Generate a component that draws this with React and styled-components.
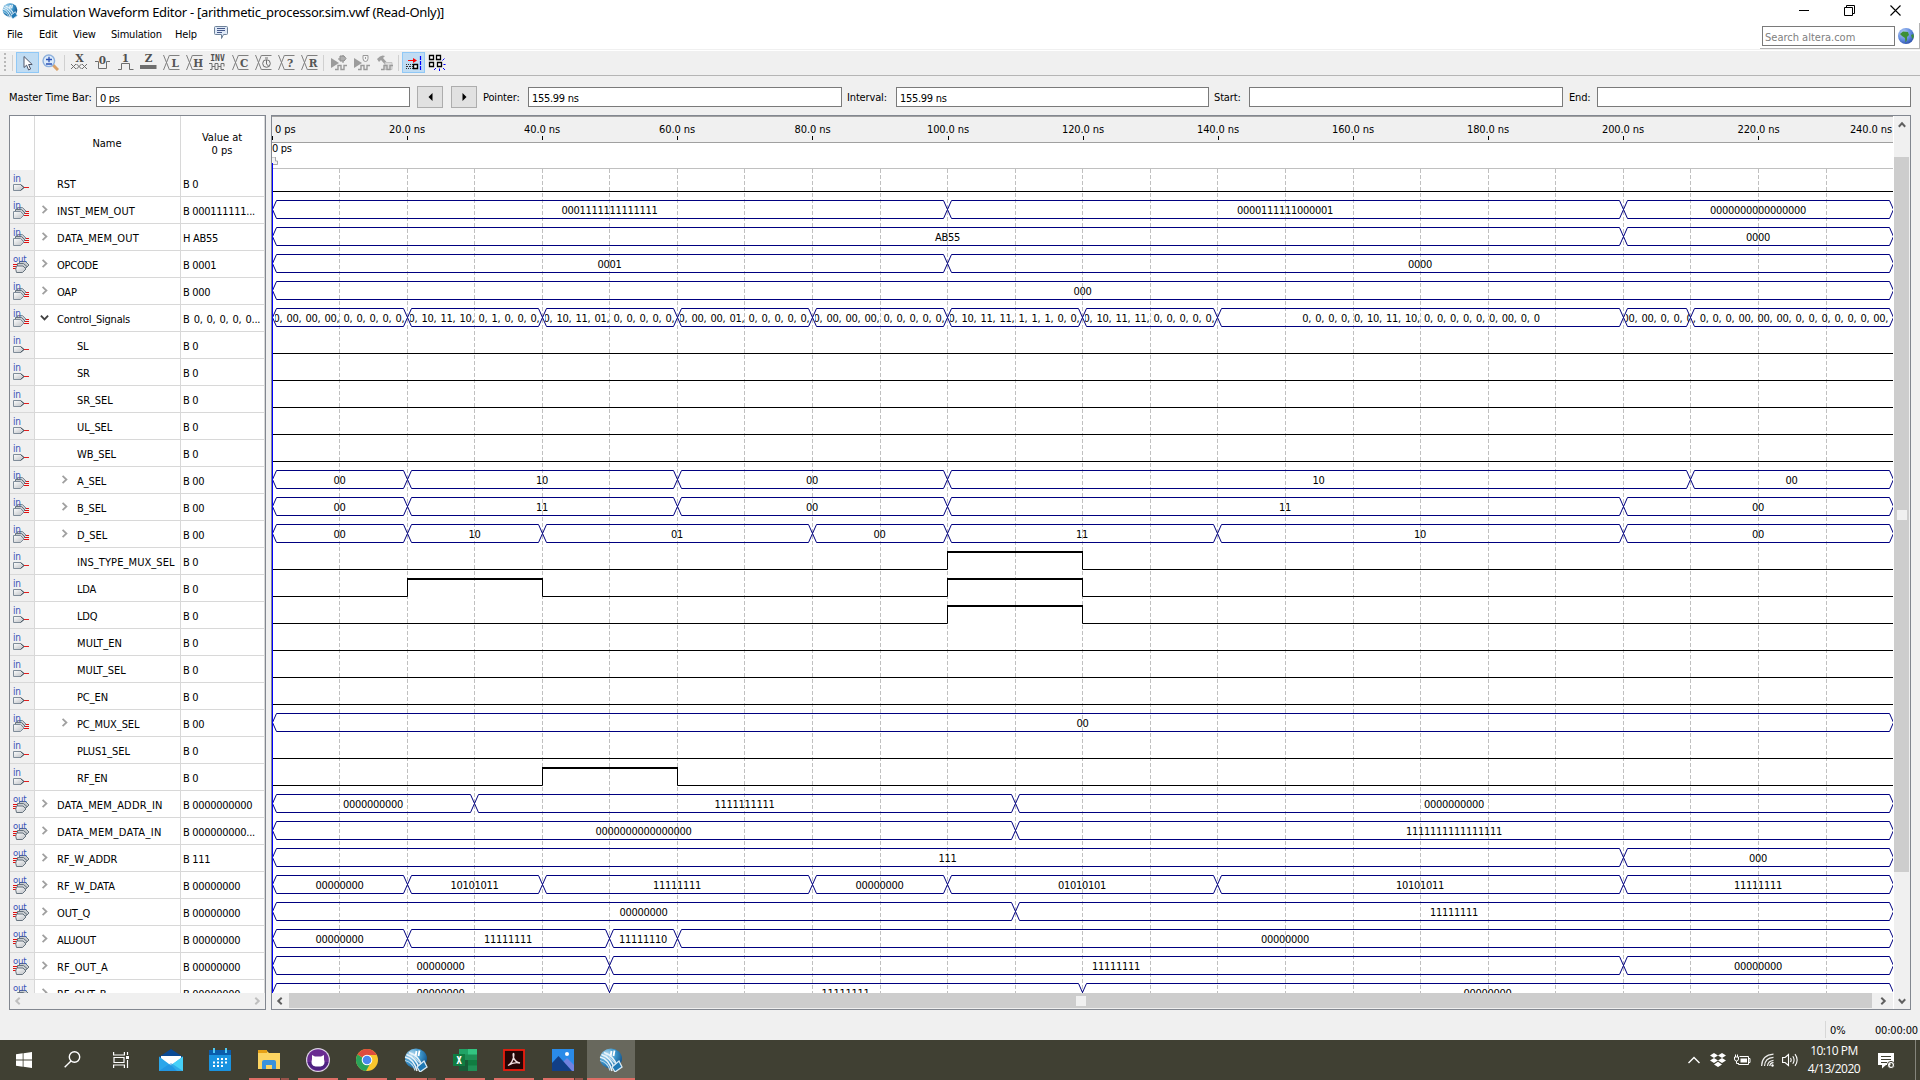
import React from "react";
import styled, { createGlobalStyle, css } from "styled-components";

const Global = createGlobalStyle`
  * { box-sizing: border-box; }
  html, body { margin: 0; padding: 0; overflow: hidden; background: #f0f0f0; }
`;

const UI = `"DejaVu Sans Condensed", "DejaVu Sans", sans-serif`;
const SEGOE = `"Open Sans", "Noto Sans", sans-serif`;

const Window = styled.div`
  width: 1920px;
  height: 1080px;
  display: flex;
  flex-direction: column;
  background: #f0f0f0;
  color: #000;
  font-family: ${UI};
  font-stretch: condensed;
  font-size: 11px;
  letter-spacing: -0.3px;
  line-height: 13px;
  overflow: hidden;
  svg { display: block; flex: none; }
`;

/* ---------- title and menu ---------- */
const TitleBar = styled.div`
  height: 23px;
  background: #fff;
  display: flex;
  align-items: flex-start;
  padding: 3px 19px 0 2px;
`;
const Title = styled.div`
  font-family: "Noto Sans", sans-serif;
  font-stretch: normal;
  font-size: 13px;
  letter-spacing: ${(p) => p.$ls}px;
  line-height: 18px;
  margin-left: 5px;
  flex: 1;
  white-space: nowrap;
`;
const Caption = styled.div`
  display: flex;
  gap: 35px;
  padding-top: 2px;
`;
const MenuBar = styled.div`
  height: 26px;
  background: #fff;
  display: flex;
  padding-left: 7px;
`;
const MenuItem = styled.div`
  width: ${(p) => p.$w}px;
  padding-top: 5px;
  letter-spacing: -0.2px;
`;
const MenuIcon = styled.div`
  padding-top: 3px;
  flex: 1;
`;
const SearchTray = styled.div`
  width: 160px;
  display: flex;
  gap: 3px;
  padding: 3px 0 0 2px;
  border-right: 1px solid #b4b4b4;
  border-bottom: 1px solid #b4b4b4;
`;
const SearchBox = styled.div`
  width: 133px;
  height: 20px;
  border: 1px solid #7a7a7a;
  color: #808080;
  padding: 4px 2px;
  letter-spacing: 0;
`;
const Globe = styled.div`padding-top: 2px;`;

/* ---------- toolbar ---------- */
const ToolBar = styled.div`
  height: 27px;
  border-top: 1px solid #f0f0f0;
  box-shadow: inset 0 1px 0 #fff;
  border-bottom: 1px solid #b5b5b5;
  display: flex;
  padding: 2px 0 0 4px;
  font-stretch: normal;
  letter-spacing: 0;
`;
const Tool = styled.div`
  width: 23px;
  height: 21px;
  display: flex;
  align-items: center;
  justify-content: center;
  ${(p) =>
    p.$on &&
    css`
      background: #c0dcf3;
      border: 1px solid #90c8f6;
    `}
`;
const Sep = styled.div`
  width: 1px;
  height: 16px;
  margin: 3px 3px 0 2px;
  background: #d0d0d0;
`;
const Handle = styled.div`
  width: 2px;
  height: 20px;
  margin: 1px 4px 0 0;
  background: repeating-linear-gradient(#b8b8b8 0 2px, transparent 2px 4px);
`;

/* ---------- time fields ---------- */
const TimeBar = styled.div`
  height: 39px;
  display: flex;
  align-items: flex-start;
  padding: 10px 9px 0 9px;
`;
const Label = styled.div`
  width: ${(p) => p.$w}px;
  padding: 5px 0 0 ${(p) => p.$pad || 0}px;
  white-space: nowrap;
  letter-spacing: ${(p) => p.$ls ?? -0.15}px;
`;
const Field = styled.div`
  width: ${(p) => p.$w || 314}px;
  height: 20px;
  margin-top: 1px;
  border: 1px solid #7a7a7a;
  background: #fff;
  padding: 4px 3px;
`;
const Step = styled.div`
  width: 26px;
  height: 22px;
  margin-left: ${(p) => p.$gap}px;
  border: 1px solid #adadad;
  background: #e1e1e1;
  display: flex;
  align-items: center;
  justify-content: center;
`;

/* ---------- panels ---------- */
const Panels = styled.div`
  height: 895px;
  display: flex;
  gap: 5px;
  padding: 0 9px;
`;
const Frame = styled.div`
  width: ${(p) => p.$w}px;
  height: 895px;
  border: 1px solid #828790;
  display: flex;
  flex-direction: ${(p) => p.$dir};
  overflow: hidden;
`;
const Table = styled.div`
  height: 877px;
  background: #fff;
  overflow: hidden;
  display: flex;
  flex-direction: column;
`;
const rowGrid = css`
  display: grid;
  grid-template-columns: 25px 146px 84px;
  flex: none;
`;
const HeadRow = styled.div`
  ${rowGrid}
  height: 54px;
`;
const HeadCell = styled.div`
  border-right: 1px solid #d8d8d8;
  display: flex;
  align-items: center;
  justify-content: center;
  text-align: center;
  letter-spacing: 0;
  padding: 1px 1px 0 0;
`;
const Row = styled.div`
  ${rowGrid}
  height: 27px;
`;
const Cell = styled.div`
  border-right: 1px solid #d8d8d8;
  border-bottom: 1px solid #d8d8d8;
  background: ${(p) => (p.$icon ? "#f0f0f0" : "#fff")};
  display: flex;
  align-items: center;
  overflow: hidden;
  white-space: nowrap;
  padding-left: ${(p) => p.$pad || 0}px;
`;
const Expander = styled.div`
  width: 17px;
  height: 10px;
  flex: none;
`;
const SignalName = styled.span`
  padding-top: 2px;
  letter-spacing: ${(p) => p.$ls}px;
`;
const SignalValue = styled.span`
  padding-top: 2px;
  word-spacing: ${(p) => (p.$list ? 1.3 : 0)}px;
`;

/* ---------- scroll bars ---------- */
const HScroll = styled.div`
  height: 16px;
  display: flex;
  background: #f0f0f0;
`;
const VScroll = styled.div`
  width: 17px;
  display: flex;
  flex-direction: column;
  background: #f0f0f0;
  border-left: 1px solid #fff;
`;
const ArrowBox = styled.div`
  width: ${(p) => p.$w || 16}px;
  height: ${(p) => p.$h || 15}px;
  display: flex;
  align-items: center;
  justify-content: center;
`;
const Track = styled.div`
  flex: 1;
  display: flex;
  flex-direction: column;
`;
const Thumb = styled.div`
  background: #cdcdcd;
  display: flex;
  align-items: center;
  justify-content: center;
  width: ${(p) => p.$w}px;
  height: ${(p) => p.$h}px;
  margin-top: ${(p) => p.$mt || 0}px;
`;
const Grip = styled.div`
  width: 10px;
  height: 10px;
  background: #f0f0f0;
`;

/* ---------- waveform ---------- */
const WaveColumn = styled.div`
  width: 1621px;
  display: flex;
  flex-direction: column;
  overflow: hidden;
`;
const Ruler = styled.div`
  height: 27px;
  flex: none;
  border-top: 1px solid #a0a0a0;
  border-bottom: 1px solid #a0a0a0;
  display: flex;
`;
const RulerMark = styled.div`
  width: ${(p) => p.$w}px;
  padding-top: 7px;
  padding-left: ${(p) => (p.$align ? 0 : 1)}px;
  text-align: ${(p) => p.$align || "center"};
  flex: none;
  letter-spacing: -0.1px;
`;
const MarkText = styled.div`line-height: 12px; height: 12px; white-space: nowrap;`;
const Tick = styled.div`
  width: 1px;
  height: 4px;
  background: #000;
  margin: 0 auto;
`;
const FirstTick = styled(Tick)`margin: 0;`;
const CursorBar = styled.div`
  height: 26px;
  flex: none;
  background: #fff;
  border-bottom: 1px solid #c0c0c0;
  line-height: 12px;
  position: relative;
`;
const CursorLabel = styled.div`
  height: 14px;
`;
const Lanes = styled.div`
  height: 824px;
  background: #fff;
  overflow: hidden;
  position: relative;
  padding-top: 1px;
`;
const Lane = styled.div`
  height: 27px;
  position: relative;
  display: flex;
`;
const Overlay = styled.svg`
  position: absolute;
  left: 0;
  top: 0;
`;
const MasterLine = styled.div`
  position: absolute;
  left: 0;
  top: ${(p) => p.$top}px;
  width: 1px;
  height: ${(p) => p.$h}px;
  background: #0000ff;
`;
const Segment = styled.div`
  flex: none;
  margin: 0 4px;
  height: 27px;
  display: flex;
  justify-content: center;
  align-items: center;
  overflow: hidden;
  white-space: nowrap;
  position: relative;
  word-spacing: 1.3px;
`;
const ListSegment = styled(Segment)`
  margin: 0 1px 0 3px;
`;
const SegmentText = styled.span`flex: none;`;

/* ---------- status and task bar ---------- */
const StatusBar = styled.div`
  height: 30px;
  display: flex;
  justify-content: flex-end;
  padding: 11px 1px 0 0;
`;
const StatusItem = styled.div`
  width: ${(p) => p.$w}px;
  height: 17px;
  padding: 3px 0 0 4px;
  letter-spacing: ${(p) => p.$ls}px;
  border-left: 1px solid ${(p) => (p.$line ? "#d7d7d7" : "transparent")};
`;
const TaskBar = styled.div`
  height: 40px;
  background: #404033;
  display: flex;
  color: #fff;
`;
const TaskButton = styled.div`
  width: ${(p) => p.$w || 49}px;
  height: 40px;
  display: flex;
  flex-direction: column;
  align-items: center;
  background: ${(p) => (p.$active ? "#68685d" : "transparent")};
`;
const AppIcon = styled.div`
  height: 38px;
  display: flex;
  align-items: center;
  justify-content: center;
  padding-top: 1px;
`;
const RunLine = styled.div`
  width: ${(p) => (p.$active ? 48 : 40)}px;
  height: 2px;
  background: ${(p) =>
    p.$multi
      ? "linear-gradient(90deg, #dd6e66 31px, #4a3b32 31px 32px, #98534a 32px)"
      : "#dd6e66"};
`;
const Tray = styled.div`
  margin-left: auto;
  display: flex;
  align-items: center;
`;
const TrayIcon = styled.div`
  width: ${(p) => p.$w}px;
`;
const Clock = styled.div`
  width: 60px;
  font-family: ${SEGOE};
  font-stretch: normal;
  font-size: 12px;
  line-height: 18px;
  letter-spacing: -0.5px;
  text-align: center;
  white-space: nowrap;
  margin-right: 14px;
`;
const ShowDesktop = styled.div`
  width: 5px;
  height: 40px;
  margin-left: 20px;
  border-left: 1px solid #85857c;
`;

/* ---------- data ---------- */
const K = 6.757;
const W = 1621;
const xp = (t) => Math.floor(K * t);
const z = (n) => "0".repeat(n);
const o = (n) => "1".repeat(n);

const ctl = (a, b, d, ins = 0, lda = 0, ldq = 0, rf = 0) =>
  `0, 0, 0, 0, 0, ${a}, ${b}, ${d}, ${ins}, ${lda}, ${ldq}, 0, 0, 0, 00, 0, ${rf}`;

const bus = (name, value, segs, extra = {}) => ({ name, value, segs, kind: "inBus", ...extra });
const bit = (name, highs = [], extra = {}) => ({ name, value: "B 0", highs, kind: "in", child: true, ...extra });
const out = { kind: "outBus" };
const child = { child: true };

const signals = [
  bit("RST", [], { child: false }),
  bus("INST_MEM_OUT", "B 000111111...", [[0, "0001111111111111"], [100, "0000111111000001"], [200, z(16)]], { ls: 0.08 }),
  bus("DATA_MEM_OUT", "H AB55", [[0, "AB55"], [200, "0000"]], { ls: 0.2 }),
  bus("OPCODE", "B 0001", [[0, "0001"], [100, "0000"]], out),
  bus("OAP", "B 000", [[0, "000"]]),
  bus(
    "Control_Signals",
    "B 0, 0, 0, 0, 0...",
    [
      [0, ctl("00", "00", "00")],
      [20, ctl("10", "11", "10", 0, 1)],
      [40, ctl("10", "11", "01", 0, 0, 0, 1)],
      [60, ctl("00", "00", "01")],
      [80, ctl("00", "00", "00")],
      [100, ctl("10", "11", "11", 1, 1, 1)],
      [120, ctl("10", "11", "11")],
      [140, ctl("10", "11", "10")],
      [200, ctl("10", "00", "00")],
      [210, ctl("00", "00", "00")],
    ],
    { open: true }
  ),
  bit("SL"),
  bit("SR"),
  bit("SR_SEL"),
  bit("UL_SEL"),
  bit("WB_SEL"),
  bus("A_SEL", "B 00", [[0, "00"], [20, "10"], [60, "00"], [100, "10"], [210, "00"]], child),
  bus("B_SEL", "B 00", [[0, "00"], [20, "11"], [60, "00"], [100, "11"], [200, "00"]], child),
  bus("D_SEL", "B 00", [[0, "00"], [20, "10"], [40, "01"], [80, "00"], [100, "11"], [140, "10"], [200, "00"]], child),
  bit("INS_TYPE_MUX_SEL", [[100, 120]], { ls: 0.08 }),
  bit("LDA", [[20, 40], [100, 120]]),
  bit("LDQ", [[100, 120]]),
  bit("MULT_EN", [], { ls: 0.1 }),
  bit("MULT_SEL", [], { ls: 0 }),
  bit("PC_EN"),
  bus("PC_MUX_SEL", "B 00", [[0, "00"]], child),
  bit("PLUS1_SEL"),
  bit("RF_EN", [[40, 60]]),
  bus("DATA_MEM_ADDR_IN", "B 0000000000", [[0, z(10)], [30, o(10)], [110, z(10)]], { kind: "outBus", ls: 0.18 }),
  bus("DATA_MEM_DATA_IN", "B 000000000...", [[0, z(16)], [110, o(16)]], { kind: "outBus", ls: 0.36 }),
  bus("RF_W_ADDR", "B 111", [[0, "111"], [200, "000"]], out),
  bus(
    "RF_W_DATA",
    "B 00000000",
    [[0, z(8)], [20, "10101011"], [40, o(8)], [80, z(8)], [100, "01010101"], [140, "10101011"], [200, o(8)]],
    { kind: "outBus", ls: 0.06 }
  ),
  bus("OUT_Q", "B 00000000", [[0, z(8)], [110, o(8)]], out),
  bus("ALUOUT", "B 00000000", [[0, z(8)], [20, o(8)], [50, "11111110"], [60, z(8)]], out),
  bus("RF_OUT_A", "B 00000000", [[0, z(8)], [50, o(8)], [200, z(8)]], { kind: "outBus", ls: 0.08 }),
  bus("RF_OUT_B", "B 00000000", [[0, z(8)], [50, o(8)], [120, z(8)]], out),
];

/* ---------- drawings ---------- */
function PinIcon({ kind }) {
  const label = kind === "outBus" ? "out" : "in";
  return (
    <svg width="18" height="20" viewBox="0 0 18 20">
      <defs>
        <linearGradient id="pin" x1="0" y1="0" x2="1" y2="1">
          <stop offset="0" stopColor="#fff" />
          <stop offset="1" stopColor="#b9bdc2" />
        </linearGradient>
      </defs>
      {kind === "in" && (
        <g>
          <path d="M12 14.5h5" stroke="#e02020" />
          <path d="M1.5 11.5h7l3.5 3-3.5 3h-7z" fill="url(#pin)" stroke="#7f8c99" />
          <path d="M8.5 11.5l3.5 3-3.5 3" fill="none" stroke="#44525c" />
        </g>
      )}
      {kind === "inBus" && (
        <g>
          <path d="M12 11.5h5M12 13.5h5M12 15.5h5" stroke="#e01010" strokeWidth="1.1" />
          <path d="M5.5 7.5h5l3.500 3.500-3.500 3.500h-5z" fill="#c9cdd1" stroke="#7f8c99" />
          <path d="M3.5 9.5h6l3.500 3.500-3.500 3.500h-6z" fill="#c9cdd1" stroke="#66737e" />
          <path d="M1.5 11.5h7l3.500 3.500-3.500 3.500h-7z" fill="url(#pin)" stroke="#7f8c99" />
        </g>
      )}
      {kind === "outBus" && (
        <g>
          <path d="M1 10.5h4M1 12.5h4M1 14.5h4" stroke="#e01010" />
          <path d="M7.5 7.5h6l3.5 3.5-3.5 3.5h-6z" fill="#c9cdd1" stroke="#66737e" />
          <path d="M5.5 9.5h6l3.5 3-3.5 3.5h-6z" fill="#c9cdd1" stroke="#66737e" />
          <path d="M4.5 12q-1.500 3 0 6.500h6l3.500-3.500-3-3z" fill="url(#pin)" stroke="#66737e" />
        </g>
      )}
      <text x="1" y={kind === "outBus" ? 7.5 : 9} fontSize={kind === "outBus" ? 9.5 : 10} fill="#3a53b8" fontFamily="DejaVu Sans Condensed, DejaVu Sans" letterSpacing="-0.2">
        {label}
      </text>
    </svg>
  );
}

function Chevron({ dir = "right", color = "#606060", size = 8, w = 2 }) {
  const rot = { right: 0, down: 90, left: 180, up: 270 }[dir];
  return (
    <svg width={size} height={size} viewBox="0 0 8 8">
      <path d="M2.3 0.8L5.7 4L2.3 7.2" fill="none" stroke={color} strokeWidth={w} transform={`rotate(${rot} 4 4)`} />
    </svg>
  );
}

function QuartusLogo({ size }) {
  return (
    <svg width={size} height={size} viewBox="0 0 24 24">
      <defs>
        <radialGradient id="ball" cx="0.3" cy="0.3" r="0.8">
          <stop offset="0" stopColor="#bfe0f2" />
          <stop offset="0.5" stopColor="#3f97cc" />
          <stop offset="1" stopColor="#0d4f88" />
        </radialGradient>
      </defs>
      <ellipse cx="12" cy="10.5" rx="11" ry="10" fill="url(#ball)" />
      <path d="M12.500 3l-1 5.500M15.500 2.500l-1 5.500" stroke="#fff" strokeWidth="1.8" />
      <path d="M1 9q9 2 12 14M2.500 6.500q10 3 13 15M5 4.500q10 3 13 14" fill="none" stroke="#e8f3fa" strokeWidth="1.5" />
      <path d="M1 12.500q8 2 10 10M10 9l10 10" fill="none" stroke="#b8d8ec" strokeWidth="1.1" />
      <path d="M13 19l7-6 3 6-7 5z" fill="#1f78b4" stroke="#d9eaf5" strokeWidth="1.3" />
    </svg>
  );
}

const G = "#6e6e6e";
function XLetter({ ch, children }) {
  return (
    <svg width="17" height="17" viewBox="0 0 17 17">
      <path d="M0.5 1l6 15M6.5 1l-6 15M7 1.5h9.5M7 15.5h9.500" stroke="#808080" fill="none" />
      {ch && (
        <text x="12.2" y="12.5" textAnchor="middle" fontSize="10.5" fontWeight="bold" fill="#565656" fontFamily="DejaVu Serif">
          {ch}
        </text>
      )}
      {children}
    </svg>
  );
}
function Glyph({ ch, y = 8, size = 10.5, children }) {
  return (
    <svg width="17" height="17" viewBox="0 0 17 17">
      <text x="8.5" y={y} textAnchor="middle" fontSize={size} fontWeight="bold" fill="#505050" fontFamily={size < 9 ? "DejaVu Sans Mono" : "DejaVu Serif"}>
        {ch}
      </text>
      <g fill="none" stroke={G}>{children}</g>
    </svg>
  );
}
function RunIcon({ type }) {
  return (
    <svg width="17" height="17" viewBox="0 0 17 17">
      {type < 2 ? (
        <path d="M1 4l8 5-8 5z" fill="#9c9c9c" />
      ) : (
        <path d="M1 5q4-5 8-3l-2 2 7 8-2 2-7-8-2 2z" fill="#a0a0a0" />
      )}
      {type === 0 && <path d="M8 5h2V2h4l2 2.5-2 2.5h-4V5M13 1v1M13 7v2" fill="#b0b0b0" stroke="#8c8c8c" />}
      {type === 1 && <path d="M10 1.5h5v3q0 3-2.5 3t-2.5-3zM12.5 3v2" fill="#f4f4f4" stroke="#999" />}
      {type === 2 && <path d="M9 8.5h7v7h-7z" fill="#ddd" stroke="#c4c4c4" />}
      <path d="M5 15.5h3v-4h3v4h3v-4h3" fill="none" stroke="#9a9a9a" strokeWidth="1.4" />
    </svg>
  );
}

function BusWave({ segs }) {
  const d = segs
    .map(([t], i) => {
      const a = xp(t);
      const b = i === segs.length - 1 ? W : xp(segs[i + 1][0]);
      return `M${a + 0.5} 12.5L${a + 4.5} 3.5H${b - 3.5}L${b + 0.5} 12.5M${a + 0.5} 12.5L${a + 4.5} 21.5H${b - 3.5}L${b + 0.5} 12.5`;
    })
    .join("");
  return (
    <Overlay width={W} height="27">
      <path d={d} fill="none" stroke="#000080" strokeWidth="1" />
    </Overlay>
  );
}

function BitWave({ highs }) {
  let low = "M1 21.5";
  highs.forEach(([a, b]) => {
    low += `H${xp(a) + 0.5}V3.5M${xp(b) + 0.5} 3.5V21.5`;
  });
  low += `H${W}`;
  return (
    <Overlay width={W} height="27">
      <path d={low} fill="none" stroke="#000" />
      {highs.map(([a, b]) => (
        <path key={a} d={`M${xp(a)} 4H${xp(b) + 1}`} stroke="#000" strokeWidth="2" />
      ))}
    </Overlay>
  );
}

function WaveLane({ s }) {
  if (!s.segs)
    return (
      <Lane>
        <BitWave highs={s.highs} />
      </Lane>
    );
  const Box = s.open ? ListSegment : Segment;
  return (
    <Lane>
      <BusWave segs={s.segs} />
      {s.segs.map(([t, text], i) => {
        const b = i === s.segs.length - 1 ? W : xp(s.segs[i + 1][0]);
        return (
          <Box key={t} style={{ width: b - xp(t) - (s.open ? 4 : 8) }}>
            <SegmentText>{text}</SegmentText>
          </Box>
        );
      })}
    </Lane>
  );
}

const marks = Array.from({ length: 11 }, (_, i) => (i + 1) * 20);

function WavePanel() {
  return (
    <Frame $w={1640} $dir="row">
      <WaveColumn>
        <Ruler>
          <RulerMark $w={67} $align="left">
            <MarkText>&nbsp;0 ps</MarkText>
            <FirstTick />
          </RulerMark>
          {marks.map((t) => (
            <RulerMark key={t} $w={xp(t + 10) - xp(t - 10)}>
              <MarkText>{t}.0 ns</MarkText>
              <Tick />
            </RulerMark>
          ))}
          <RulerMark $w={66} $align="right">
            <MarkText>240.0 ns</MarkText>
          </RulerMark>
        </Ruler>
        <CursorBar>
          <CursorLabel>0 ps</CursorLabel>
          <svg width="6" height="8" viewBox="0 0 6 8">
            <path d="M0 0h3.5v4h2v3.5h-5" fill="#f4f4f4" stroke="#a8a8a8" />
          </svg>
          <MasterLine $top={20} $h={6} />
        </CursorBar>
        <Lanes>
          <Overlay width={W} height="824">
            {Array.from({ length: 23 }, (_, i) => (i + 1) * 10).map((t) => (
              <path key={t} d={`M${xp(t) + 0.5} 0V824`} stroke="#c0c0c0" strokeDasharray="4 2" />
            ))}
          </Overlay>
          {signals.map((s) => (
            <WaveLane key={s.name} s={s} />
          ))}
          <MasterLine $top={0} $h={824} />
        </Lanes>
        <HScroll>
          <ArrowBox $w={17}><Chevron dir="left" /></ArrowBox>
          <Thumb $w={1585} $h={15}><Grip /></Thumb>
          <ArrowBox $w={21}><Chevron /></ArrowBox>
        </HScroll>
      </WaveColumn>
      <VScroll>
        <ArrowBox $w={15} $h={18}><Chevron dir="up" /></ArrowBox>
        <Track>
          <Thumb $w={15} $h={715} $mt={23}><Grip /></Thumb>
        </Track>
        <ArrowBox $w={15} $h={16}><Chevron dir="down" /></ArrowBox>
      </VScroll>
    </Frame>
  );
}

function SignalTable() {
  return (
    <Frame $w={257} $dir="column">
      <Table>
        <HeadRow>
          <HeadCell />
          <HeadCell>Name</HeadCell>
          <HeadCell>Value at<br />0 ps</HeadCell>
        </HeadRow>
        {signals.map((s) => (
          <Row key={s.name}>
            <Cell $icon $pad={2}><PinIcon kind={s.kind} /></Cell>
            <Cell $pad={s.child ? 25 : 5}>
              <Expander>
                {s.segs && <Chevron dir={s.open ? "down" : "right"} color={s.open ? "#404040" : "#a0a0a0"} size={9} w={1.6} />}
              </Expander>
              <SignalName $ls={s.ls ?? (s.name.includes("_") && !s.open ? -0.1 : -0.22)}>{s.name}</SignalName>
            </Cell>
            <Cell $pad={2}>
              <SignalValue $list={s.open}>{s.value}</SignalValue>
            </Cell>
          </Row>
        ))}
      </Table>
      <HScroll>
        <ArrowBox><Chevron dir="left" color="#bfbfbf" /></ArrowBox>
        <Track />
        <ArrowBox><Chevron color="#bfbfbf" /></ArrowBox>
      </HScroll>
    </Frame>
  );
}

function Tools() {
  return (
    <ToolBar>
      <Handle />
      <Sep />
      <Tool $on>
        <svg width="16" height="16" viewBox="0 0 16 16">
          <path d="M4 1.5v11l2.6-2.3 2 4.8 2-1-2-4.5h3.6z" fill="#fff" stroke="#4d5468" />
        </svg>
      </Tool>
      <Tool>
        <svg width="17" height="17" viewBox="0 0 17 17">
          <path d="M11 11l5 5" stroke="#d9a066" strokeWidth="3" />
          <circle cx="6.8" cy="6.8" r="5.8" fill="#dcebfa" stroke="#8db0dd" strokeWidth="1.4" />
          <path d="M4 5.5h6M7 2.7v5.5M4 10h6" stroke="#2b51b5" strokeWidth="1.3" />
        </svg>
      </Tool>
      <Sep />
      <Tool>
        <Glyph ch="X"><path d="M0 10l5 5M5 10l-5 5M5.5 10l5 5M10.5 10l-5 5M11 10l5 5M16 10l-5 5" /></Glyph>
      </Tool>
      <Tool><Glyph ch="0" y={10}><path d="M1 7.5h3.5v7h8v-7h3.5" /></Glyph></Tool>
      <Tool><Glyph ch="1" y={8}><path d="M1 15.5h3.5v-6h8v6h4" /></Glyph></Tool>
      <Tool><Glyph ch="Z" y={8}><path d="M0 13h16.5" strokeWidth="4" /></Glyph></Tool>
      <Tool><XLetter ch="L" /></Tool>
      <Tool><XLetter ch="H" /></Tool>
      <Tool>
        <Glyph ch="INV" y={7} size={8}>
          <path d="M0 9.5h3v3h3v-3h3v3h3v-3h3v3M1 15.5h2v-3h3v3h3v-3h3v3h3" />
        </Glyph>
      </Tool>
      <Tool><XLetter ch="C" /></Tool>
      <Tool>
        <XLetter>
          <circle cx="11.5" cy="9.5" r="3.8" fill="#f0f0f0" stroke={G} />
          <path d="M11.5 6v4l2 2M10 4h3" stroke={G} fill="none" />
        </XLetter>
      </Tool>
      <Tool><XLetter ch="?" /></Tool>
      <Tool><XLetter ch="R" /></Tool>
      <Sep />
      <Tool><RunIcon type={0} /></Tool>
      <Tool><RunIcon type={1} /></Tool>
      <Tool><RunIcon type={2} /></Tool>
      <Sep />
      <Tool $on>
        <svg width="17" height="17" viewBox="0 0 17 17">
          <path d="M3 6.5h6" stroke="#f00" />
          <path d="M8 4l4 2.5L8 9z" fill="#f00" />
          <path d="M1 10.5h7M1 14.5h7" stroke="#333" strokeDasharray="1 1" />
          <path d="M1 12.5h7" stroke="#333" strokeDasharray="2 1" />
          <path d="M8.5 10.5h4v4h-4z" fill="#fff" stroke="#000" strokeWidth="1.4" />
          <path d="M15.5 2v15" stroke="#00f" strokeWidth="1.2" strokeDasharray="4 1" />
        </svg>
      </Tool>
      <Tool>
        <svg width="18" height="17" viewBox="0 0 18 17">
          <path d="M1.5 1.5h4v4h-4zM8.5 1.5h4v4h-4zM1.5 8.5h4v4h-4zM9.5 8.5h4v4h-4z" fill="#fff" stroke="#000" strokeWidth="1.3" />
          <path d="M14.5 6.5l2-2M15.5 10.500h2M15 14l2 2M11.5 14.5v2.5M6 16l2-2" stroke="#00f" />
        </svg>
      </Tool>
    </ToolBar>
  );
}

const icons = {
  start: (
    <svg width="16" height="16" viewBox="0 0 16 16" fill="#fff">
      <path d="M0 2.2l6.7-.9v6.3H0zM7.5 1.2L16 0v7.6H7.5zM0 8.4h6.7v6.3L0 13.8zM7.5 8.4H16V16l-8.5-1.2z" />
    </svg>
  ),
  search: (
    <svg width="17" height="17" viewBox="0 0 17 17" fill="none" stroke="#fff" strokeWidth="1.4">
      <circle cx="10.5" cy="6" r="5.2" />
      <path d="M7 10l-6.3 6.3" />
    </svg>
  ),
  tasks: (
    <svg width="17" height="16" viewBox="0 0 17 16" fill="none" stroke="#fff" strokeWidth="1.2">
      <path d="M0.6 0v3h10.8V0M0.6 16v-3h10.8v3M1 5.5h10v5H1zM14.5 0v3M14.5 8v8" />
      <path d="M13 4h3v3h-3z" fill="#fff" stroke="none" />
    </svg>
  ),
  mail: (
    <svg width="24" height="24" viewBox="0 0 24 24">
      <path d="M0 9L12 1l12 8v3H0z" fill="#0a4a94" />
      <path d="M2 8h20v10H2z" fill="#fff" />
      <path d="M0 8.5l12 9 12-9V23H0z" fill="#2aa6ea" />
      <path d="M12 17l12-8.5V23H18z" fill="#46d0f8" />
      <path d="M0 23l12-8 12 8z" fill="#1988dc" opacity="0.5" />
    </svg>
  ),
  calendar: (
    <svg width="22" height="24" viewBox="0 0 22 24">
      <rect y="2" width="22" height="21" rx="1" fill="#1a93e0" />
      <path d="M0 2h22v5H0z" fill="#0b5cab" />
      <path d="M5 0v5M17 0v5" stroke="#4fc9f5" strokeWidth="2" />
      <path d="M8 11h10M4 14.500h14M4 18h10" stroke="#fff" strokeWidth="2" strokeDasharray="2 2" />
    </svg>
  ),
  explorer: (
    <svg width="22" height="20" viewBox="0 0 22 20">
      <path d="M0 1h9l2 2h11v16H0z" fill="#fcd462" />
      <path d="M0 0h9v3H0z" fill="#e6a117" />
      <path d="M4 19v-7q0-2 2-2h10q2 0 2 2v7h-4v-4H8v4z" fill="#3a92dc" />
    </svg>
  ),
  github: (
    <svg width="24" height="24" viewBox="0 0 24 24">
      <circle cx="12" cy="12" r="12" fill="#ddd3e6" />
      <circle cx="12" cy="12" r="10.8" fill="#6a2c91" />
      <path d="M1.5 14a10.8 10.8 0 0 0 21 0z" fill="#4d2080" />
      <path d="M6 7l3 1.5h6L18 7v4q2 7-3.5 7.5h-5Q4 18 6 11z" fill="#fff" />
    </svg>
  ),
  chrome: (
    <svg width="22" height="22" viewBox="0 0 22 22">
      <circle cx="11" cy="11" r="11" fill="#f9c62d" />
      <path d="M11 11L1.5 5.5A11 11 0 0 1 20.5 5.5L20.5 6H11z" fill="#df4c3e" />
      <path d="M1.5 5.5A11 11 0 0 0 10 22l4.5-8z" fill="#2aa25a" />
      <circle cx="11" cy="11" r="5.3" fill="#fff" />
      <circle cx="11" cy="11" r="4.3" fill="#4a88ee" />
    </svg>
  ),
  quartus: <QuartusLogo size={24} />,
  excel: (
    <svg width="24" height="22" viewBox="0 0 24 22">
      <path d="M6 0h18v22H6z" fill="#1f8f56" />
      <path d="M15 0h9v5.5h-9z" fill="#33c481" />
      <path d="M6 0h9v5.5H6z" fill="#21a366" />
      <path d="M15 11h9v5.5h-9z" fill="#107c41" />
      <path d="M6 11h9v11H6z" fill="#185c37" />
      <rect y="5" width="12" height="12" fill="#107c41" />
      <text x="6" y="15" textAnchor="middle" fontSize="11" fontWeight="bold" fill="#fff" fontFamily="Open Sans">X</text>
    </svg>
  ),
  acrobat: (
    <svg width="22" height="22" viewBox="0 0 22 22">
      <rect x="1" y="1" width="20" height="20" fill="#240505" stroke="#ec1c0e" strokeWidth="1.8" />
      <path d="M5 16.5q4-2 5.500-8 .8-4 0-4t0 4q1.500 4.500 6.500 5.500-6-1.500-12 2.500z" fill="none" stroke="#f0dede" strokeWidth="1.3" />
    </svg>
  ),
  photos: (
    <svg width="22" height="22" viewBox="0 0 22 22">
      <rect width="22" height="22" fill="#2a8be8" />
      <path d="M11 13l4-4 7 7v6H11z" fill="#7183e0" />
      <path d="M0 14l6.5-7L20 22H0z" fill="#123f86" />
      <circle cx="15" cy="5" r="2" fill="#fff" />
    </svg>
  ),
};

const apps = [
  { icon: "start", w: 48 },
  { icon: "search", w: 48 },
  { icon: "tasks", w: 50 },
  { icon: "mail" },
  { icon: "calendar" },
  { icon: "explorer", run: true, multi: true },
  { icon: "github", run: true },
  { icon: "chrome", run: true },
  { icon: "quartus", run: true, multi: true },
  { icon: "excel", run: true },
  { icon: "acrobat", run: true },
  { icon: "photos", run: true, multi: true },
  { icon: "quartus", run: true, active: true, w: 48 },
];

function Taskbar() {
  return (
    <TaskBar>
      {apps.map((a, i) => (
        <TaskButton key={i} $w={a.w} $active={a.active}>
          <AppIcon>{icons[a.icon]}</AppIcon>
          {a.run && <RunLine $multi={a.multi} $active={a.active} />}
        </TaskButton>
      ))}
      <Tray>
        <TrayIcon $w={22}>
          <svg width="12" height="8" viewBox="0 0 12 8"><path d="M0.5 7L6 1.5 11.5 7" fill="none" stroke="#fff" strokeWidth="1.4" /></svg>
        </TrayIcon>
        <TrayIcon $w={24}>
          <svg width="16" height="15" viewBox="0 0 16 15" fill="#fff">
            <path d="M4 0l4 2.5L4 5 0 2.5zM12 0l4 2.5L12 5 8 2.5zM4 5l4 2.5L4 10 0 7.5zM12 5l4 2.5L12 10 8 7.5zM8 8.8l4 2.6L8 14l-4-2.6z" />
          </svg>
        </TrayIcon>
        <TrayIcon $w={27}>
          <svg width="17" height="12" viewBox="0 0 17 12" fill="none" stroke="#fff">
            <path d="M5.500 2.500h9v8H4.500v-1.500M14.5 4.500h1.500v4h-1.500M0.5 3v2q0 2 2 2t2-2V3zM1.5 3V0.5M3.5 3V0.5M2.5 7v2.500h2" />
            <path d="M6.5 4.500H13v4H6.5z" fill="#fff" stroke="none" />
          </svg>
        </TrayIcon>
        <TrayIcon $w={21}>
          <svg width="13" height="14" viewBox="0 0 13 14" fill="none" stroke="#fff" strokeWidth="1.2">
            <path d="M0.6 13Q1 2 12.5 1.2M3.5 13Q4 5 12.5 4.4M6.5 13Q7 8 12.5 7.4" opacity="0.9" />
            <path d="M8.8 13a3.7 3.7 0 0 1 3.7-3.3" />
            <circle cx="11.5" cy="12.5" r="1.2" fill="#fff" stroke="none" />
          </svg>
        </TrayIcon>
        <TrayIcon $w={22}>
          <svg width="17" height="14" viewBox="0 0 17 14" fill="none" stroke="#fff" strokeWidth="1.1">
            <path d="M0.6 4.5h2.5L6.500 1.5v11L3.1 9.5H0.6zM8.5 5q1.300 2 0 4M10.8 3.2q2.600 3.8 0 7.6M13 1.2q4.300 5.8 0 11.6" />
          </svg>
        </TrayIcon>
        <Clock>10:10 PM<br />4/13/2020</Clock>
        <svg width="17" height="17" viewBox="0 0 17 17">
          <path d="M0 1h16v12h-8l-4 3.5V13H0z" fill="#fff" />
          <path d="M3 4.5h10M3 7.5h10M3 10.5h6" stroke="#404033" />
          <circle cx="13" cy="13" r="3.6" fill="#fff" stroke="#404033" />
          <path d="M12.5 11q3 0 2 3.5-2.500 1-3-1 1.500 0 1-2.500z" fill="#404033" />
        </svg>
        <ShowDesktop />
      </Tray>
    </TaskBar>
  );
}

export default function App() {
  return (
    <Window>
      <Global />
      <TitleBar>
        <QuartusLogo size={16} />
        <Title $ls={-0.29}>Simulation Waveform Editor - [arithmetic_processor.sim.vwf (Read-Only)]</Title>
        <Caption>
          <svg width="10" height="11" viewBox="0 0 10 11"><path d="M0 5.5h10" stroke="#000" /></svg>
          <svg width="11" height="11" viewBox="0 0 11 11"><path d="M0.5 2.5h8v8h-8zM2.5 2.5v-2h8v8h-2" fill="none" stroke="#000" /></svg>
          <svg width="11" height="11" viewBox="0 0 11 11"><path d="M0.5 0.5l10 10M10.5 0.5l-10 10" stroke="#000" strokeWidth="1.1" /></svg>
        </Caption>
      </TitleBar>
      <MenuBar>
        <MenuItem $w={32}>File</MenuItem>
        <MenuItem $w={34}>Edit</MenuItem>
        <MenuItem $w={38}>View</MenuItem>
        <MenuItem $w={64}>Simulation</MenuItem>
        <MenuItem $w={39}>Help</MenuItem>
        <MenuIcon>
          <svg width="14" height="13" viewBox="0 0 14 13">
            <path d="M1.5 0.5h11q1 0 1 1v6q0 1-1 1h-3l-2 4v-4h-6q-1 0-1-1v-6q0-1 1-1z" fill="#dfe9f7" stroke="#6e8299" />
            <path d="M3 2.5h8M3 4.5h8M3 6.5h5" stroke="#44588a" />
          </svg>
        </MenuIcon>
        <SearchTray>
          <SearchBox>Search altera.com</SearchBox>
          <Globe>
            <svg width="16" height="16" viewBox="0 0 16 16">
              <defs>
                <radialGradient id="sea" cx="0.35" cy="0.3" r="0.8">
                  <stop offset="0" stopColor="#b9d2f7" />
                  <stop offset="0.6" stopColor="#5c86dd" />
                  <stop offset="1" stopColor="#2345a0" />
                </radialGradient>
              </defs>
              <circle cx="8" cy="8" r="8" fill="url(#sea)" />
              <path d="M2 6l3-2.5 5 .5 1 3-2 2v3l-1.500 2.500L7 10 4 8zM13 7l2.500-1 .3 3-1.500 2z" fill="#3e8f36" />
            </svg>
          </Globe>
        </SearchTray>
      </MenuBar>
      <Tools />
      <TimeBar>
        <Label $w={87} $ls={-0.1}>Master Time Bar:</Label>
        <Field>0 ps</Field>
        <Step $gap={7}>
          <svg width="5" height="8" viewBox="0 0 5 8"><path d="M4.5 0v8L0.5 4z" /></svg>
        </Step>
        <Step $gap={8}>
          <svg width="5" height="8" viewBox="0 0 5 8"><path d="M0.5 0v8l4-4z" /></svg>
        </Step>
        <Label $w={51} $pad={6}>Pointer:</Label>
        <Field>155.99 ns</Field>
        <Label $w={54} $pad={5}>Interval:</Label>
        <Field $w={313}>155.99 ns</Field>
        <Label $w={40} $pad={5}>Start:</Label>
        <Field />
        <Label $w={34} $pad={6}>End:</Label>
        <Field />
      </TimeBar>
      <Panels>
        <SignalTable />
        <WavePanel />
      </Panels>
      <StatusBar>
        <StatusItem $w={45} $line $ls={0}>0%</StatusItem>
        <StatusItem $w={49} $ls={-0.2}>00:00:00</StatusItem>
      </StatusBar>
      <Taskbar />
    </Window>
  );
}
